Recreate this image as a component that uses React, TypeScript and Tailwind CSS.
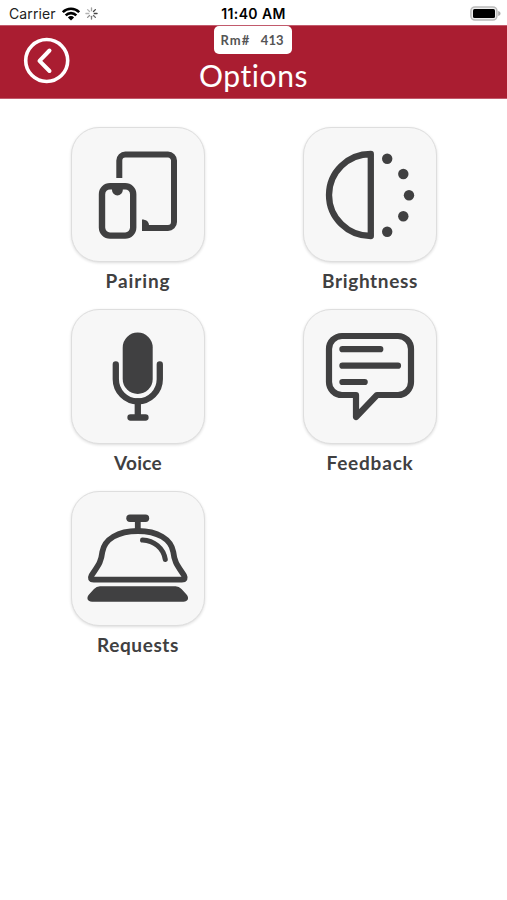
import type { ReactNode } from "react";

function PairingIcon() {
  return (
    <svg viewBox="0 0 135 135" className="-m-px size-[135px]" fill="none" stroke="currentColor" strokeWidth="6">
      <path d="M48.3 51V33.5a6 6 0 0 1 6-6H97a6 6 0 0 1 6 6V95a6 6 0 0 1-6 6H71" />
      <path d="M71 98v-5.5c4 0 7 2 7 6Z" fill="currentColor" stroke="none" />
      <rect x="31" y="59.2" width="31.2" height="49.4" rx="8" strokeWidth="6.4" />
      <path d="M41 61h10.8v2a5.4 5.4 0 0 1-10.8 0Z" fill="currentColor" stroke="none" />
    </svg>
  );
}

function BrightnessIcon() {
  return (
    <svg viewBox="0 0 135 135" className="-m-px size-[135px]" fill="currentColor">
      <path d="M67.8 27A41.8 41 0 0 0 67.8 109Z" fill="none" stroke="currentColor" strokeWidth="6.3" strokeLinejoin="round" />
      <circle cx="84.2" cy="31.7" r="5.2" />
      <circle cx="100.3" cy="47" r="5.2" />
      <circle cx="106" cy="68.2" r="5.2" />
      <circle cx="100.3" cy="89.3" r="5.2" />
      <circle cx="84.2" cy="104.8" r="5.2" />
    </svg>
  );
}

function VoiceIcon() {
  return (
    <svg viewBox="0 0 135 135" className="-m-px size-[135px]" fill="none" stroke="currentColor" strokeWidth="6.3" strokeLinecap="round">
      <rect x="51.7" y="23.5" width="30" height="61.5" rx="15" fill="currentColor" stroke="none" />
      <path d="M44.8 55.5V70.3a22 22 0 0 0 44 0V55.5" />
      <path d="M66.8 92.3v16M59.5 108.5h15" />
    </svg>
  );
}

function FeedbackIcon() {
  return (
    <svg viewBox="0 0 135 135" className="-m-px size-[135px]" fill="none" stroke="currentColor" strokeWidth="6.2" strokeLinecap="round" strokeLinejoin="round">
      <path d="M39 27H95a13 13 0 0 1 13 13V73a13 13 0 0 1-13 13H74L53 108V86H39a13 13 0 0 1-13-13V40a13 13 0 0 1 13-13Z" />
      <path d="M39.4 40.2H77.3M39.4 56.7H95M39.4 73H61.7" />
    </svg>
  );
}

function RequestsIcon() {
  return (
    <svg viewBox="0 0 135 135" className="-m-px size-[135px]" fill="none" stroke="currentColor" strokeWidth="5.8" strokeLinecap="round" strokeLinejoin="round">
      <path d="M59 27.3h15.5" strokeWidth="7.4" />
      <path d="M66.8 28v11" strokeLinecap="butt" />
      <path d="M66.8 40C47 40 33.5 48 31.3 61C30 72 27 74.5 20.5 84.5Q18.3 88.6 22.8 88.6H110.8Q115.3 88.6 113.1 84.5C106.6 74.5 103.6 72 102.3 61C100 48 86.6 40 66.8 40Z" />
      <path d="M71.5 49C83 49.5 92.5 57 94.3 68.5" strokeWidth="5" />
      <path d="M29 95.2H104.6Q108 95.2 110.5 98L115.5 103.5C118.5 107 117 110.7 112.5 110.7H21C16.5 110.7 15 107 18 103.5L23 98Q25.5 95.2 29 95.2Z" fill="currentColor" stroke="none" />
    </svg>
  );
}

type Option = { label: string; tracking: string; icon: ReactNode };

const options: Option[] = [
  { label: "Pairing", tracking: "tracking-[0.9px]", icon: <PairingIcon /> },
  { label: "Brightness", tracking: "tracking-[0.65px]", icon: <BrightnessIcon /> },
  { label: "Voice", tracking: "tracking-[0.25px]", icon: <VoiceIcon /> },
  { label: "Feedback", tracking: "tracking-[0.8px]", icon: <FeedbackIcon /> },
  { label: "Requests", tracking: "tracking-[0.6px]", icon: <RequestsIcon /> },
];

function StatusBar() {
  return (
    <div className="grid h-[25px] grid-cols-3 items-center pt-[2px] font-['Inter',sans-serif] text-[14px] leading-none text-[#222]">
      <div className="flex items-center pl-[9px]">
        <span className="tracking-[0.1px]">Carrier</span>
        <svg viewBox="0 0 18 14" className="ml-[6px] h-[14px] w-[18px]" fill="none" stroke="#000" strokeWidth="2.6">
          <path d="M.8 5.2a11.6 11.6 0 0 1 16.4 0M3.7 8.3a7.5 7.5 0 0 1 10.6 0" />
          <path d="M9 13.5 5.900 10.400a4.400 4.400 0 0 1 6.200 0Z" fill="#000" stroke="none" />
        </svg>
        <svg viewBox="0 0 14 14" className="ml-[5px] size-[13px]" stroke="#444" strokeWidth="1.4" strokeLinecap="round">
          <path d="M7 1v3" opacity=".5" />
          <path d="m11.2 2.8-2.1 2.1M13 7h-3" />
          <path d="m11.2 11.2-2.1-2.1" opacity=".8" />
          <path d="M7 13v-3" opacity=".7" />
          <path d="m2.8 11.2 2.1-2.1" opacity=".6" />
          <path d="M1 7h3m-1.200-4.200 2.100 2.100" opacity=".4" />
        </svg>
      </div>
      <span className="text-center font-semibold tracking-[0.4px] text-black">11:40 AM</span>
      <svg viewBox="0 0 31 15" className="mr-[6px] h-[15px] w-[31px] justify-self-end">
        <rect x=".9" y=".9" width="26" height="13.2" rx="4" fill="#eee" stroke="#bbb" strokeWidth="1.5" />
        <rect x="3" y="3" width="22" height="9" rx="1.5" fill="#000" />
        <path d="M28.2 5c1.600.5 2.300 1.400 2.300 2.500s-.7 2-2.300 2.500Z" fill="#aaa" />
      </svg>
    </div>
  );
}

function Header() {
  return (
    <header className="grid h-[74px] grid-cols-[1fr_auto_1fr] border-y border-[#c25a6c] bg-[#aa1d31]">
      <button aria-label="Back" className="ml-[23px] mt-[11px] size-[47px] text-white">
        <svg viewBox="0 0 47 47" className="size-full" fill="none" stroke="currentColor" strokeLinecap="round" strokeLinejoin="round">
          <circle cx="23.7" cy="23.5" r="21" strokeWidth="3.6" />
          <path d="m26.500 13.500-10 10.300 10 10.200" strokeWidth="4" />
        </svg>
      </button>
      <div className="flex flex-col items-center">
        <div className="flex h-[28px] w-[78px] items-center justify-between rounded-[5px] bg-white pl-[6px] pr-[9px] text-[13px] font-bold leading-none text-[#555]">
          <span className="tracking-[1.1px]">Rm#</span>
          <span>413</span>
        </div>
        <h1 className="mt-[5px] text-[30px] leading-[32px] tracking-[0.6px] text-white">Options</h1>
      </div>
    </header>
  );
}

export default function App() {
  return (
    <div className="min-h-screen bg-white font-['Lato',sans-serif]">
      <StatusBar />
      <Header />
      <main className="grid grid-cols-[134px_134px] gap-x-[98px] pl-[71px] pt-[28px]">
        {options.map((option) => (
          <button key={option.label} className="flex h-[182px] flex-col items-center text-[#404041]">
            <div className="h-[135px] w-[134px] shrink-0 rounded-[28px] border border-[#dedede] bg-[#f7f7f7] shadow-[0_1px_3px_rgba(0,0,0,0.14)]">
              {option.icon}
            </div>
            <span className={`mt-[7px] text-[19px] font-bold leading-[24px] ${option.tracking}`}>{option.label}</span>
          </button>
        ))}
      </main>
    </div>
  );
}
